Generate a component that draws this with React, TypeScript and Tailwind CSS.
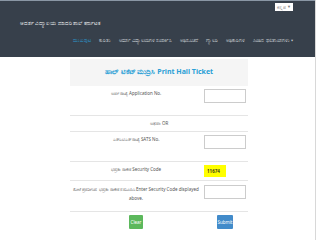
import React from "react";

const font = { fontFamily: '"Noto Sans", "Open Sans", "Liberation Sans", sans-serif' };

function Row({ label, children, className = "" }: { label: React.ReactNode; children?: React.ReactNode; className?: string }) {
  return (
    <div className={"flex border-b border-[#e5e5e5] " + className}>
      <div className="w-[132px] text-center text-[4.5px] leading-[9px] text-[#555]">{label}</div>
      <div className="ml-[2px]">{children}</div>
    </div>
  );
}

export default function App() {
  return (
    <div className="w-[320px] h-[240px] overflow-hidden bg-white flex" style={font}>
      <div className="w-[316px] h-[240px] flex flex-col border-r border-[#d8d8d8]">
        <header className="h-[57px] bg-[#37404b] border-t border-[#8a97a5] flex flex-col px-[20px] shrink-0">
          <div className="flex justify-end pr-[2px] pt-[2px]">
            <div className="bg-white text-[#777] text-[4.5px] leading-[8px] px-[2px] flex items-center gap-[1px]">
              <span>ಕನ್ನಡ</span><span className="text-[4px]">▼</span>
            </div>
          </div>
          <div className="mt-[8px] text-white text-[5.5px] leading-[8px] font-medium">ಆದರ್ಶ ವಿದ್ಯಾಲಯ ಮಾದರಿ ಶಾಲೆ ಕರ್ನಾಟಕ</div>
          <nav className="mt-[9px] flex justify-end gap-[8px] pr-[2px] text-[5px] leading-[8px] text-[#d5d9de]">
            <span className="text-[#2a9fd6]">ಮುಖಪುಟ</span>
            <span>ಕುರಿತು</span>
            <span>ಆದರ್ಶ ವಿದ್ಯಾಲಯಗಳ ಸಂಪರ್ಕಿಸಿ</span>
            <span>ಅಧಿಸೂಚನೆ</span>
            <span>ಗ್ಯಾಲರಿ</span>
            <span>ಅಧಿಕಾರಿಗಳ</span>
            <span>ಹಿಂದಿನ ಫಲಿತಾಂಶಗಳು ▾</span>
          </nav>
        </header>
        <main className="flex-1 pt-[2px]">
          <div className="ml-[70px] w-[178px]">
            <div className="h-[27px] bg-[#f5f5f5] flex items-center justify-center text-[#2a9fd6] text-[7px] font-bold">
              ಹಾಲ್ ಟಿಕೆಟ್ ಮುದ್ರಿಸಿ Print Hall Ticket
            </div>
            <Row label="ಅರ್ಜಿ ಸಂಖ್ಯೆ Application No." className="h-[30px] pt-[3px]">
              <div className="w-[42px] h-[14px] border border-[#ccc] bg-white" />
            </Row>
            <div className="h-[16px] border-b border-[#e5e5e5] flex items-center justify-center text-[4.5px] text-[#555]">ಅಥವಾ OR</div>
            <Row label="ಎಸ್‌ಎಟಿಎಸ್ ಸಂಖ್ಯೆ SATS No." className="h-[30px] pt-[3px]">
              <div className="w-[42px] h-[14px] border border-[#ccc] bg-white" />
            </Row>
            <Row label="ಭದ್ರತಾ ಸಂಕೇತ Security Code" className="h-[19px] pt-[3px]">
              <div className="w-[22px] h-[12px] bg-[#ffff00] text-[4.5px] leading-[12px] text-[#222] font-semibold pl-[3px]">11674</div>
            </Row>
            <Row
              label="ಮೇಲೆ ಪ್ರದರ್ಶಿಸಿದ ಭದ್ರತಾ ಸಂಕೇತ ನಮೂದಿಸಿ Enter Security Code displayed above."
              className="h-[31px] pt-[4px]"
            >
              <div className="w-[42px] h-[14px] border border-[#ccc] bg-white" />
            </Row>
            <div className="flex pt-[3px]">
              <div className="ml-[59px] w-[14px] h-[14px] bg-[#5cb85c] rounded-[1px] text-white text-[4.5px] flex items-center justify-center">Clear</div>
              <div className="ml-[74px] w-[16px] h-[14px] bg-[#428bca] rounded-[1px] text-white text-[4.5px] flex items-center justify-center">Submit</div>
            </div>
          </div>
        </main>
      </div>
    </div>
  );
}
